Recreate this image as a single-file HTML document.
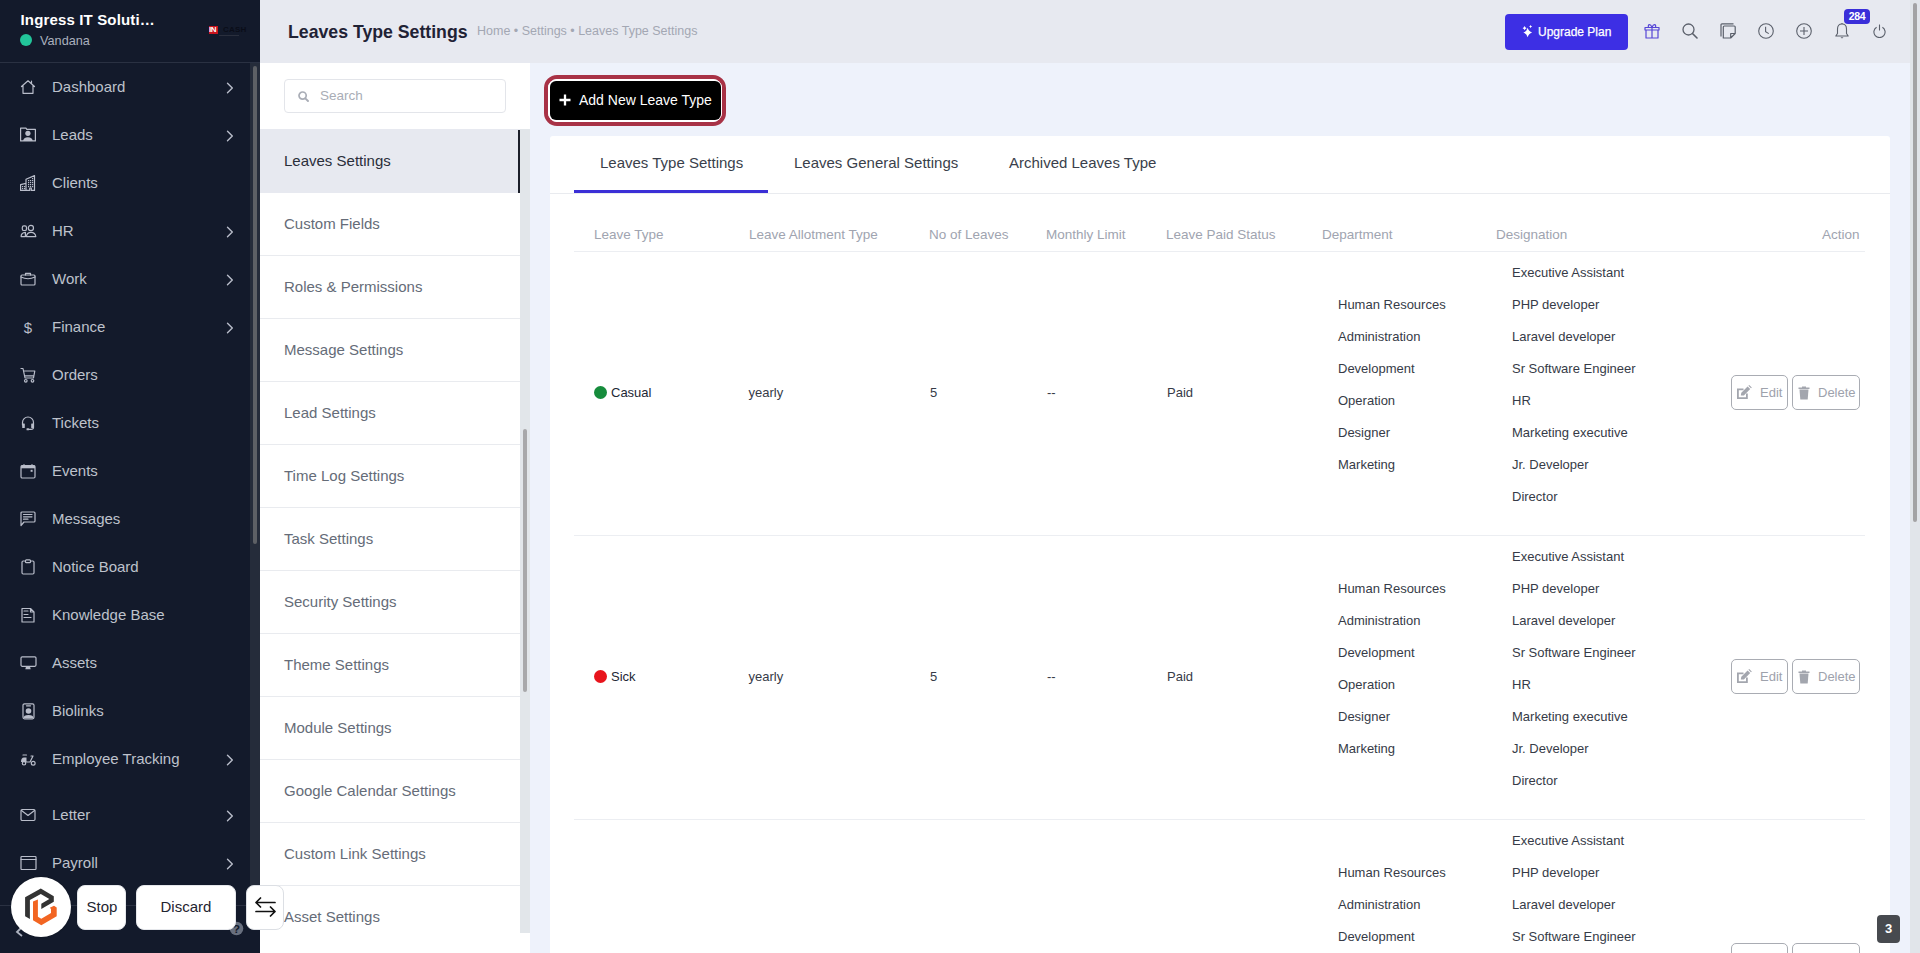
<!DOCTYPE html>
<html><head><meta charset="utf-8">
<style>
*{box-sizing:border-box;margin:0;padding:0}
html,body{width:1920px;height:953px;overflow:hidden;font-family:"Liberation Sans",sans-serif;background:#eef2fb}
.abs{position:absolute}
/* left sidebar */
#sb{position:absolute;left:0;top:0;width:260px;height:953px;background:#131a2b}
#sb .hd{position:absolute;left:0;top:0;width:260px;height:63px;border-bottom:1px solid #2a3142}
#sb .co{position:absolute;left:20.5px;top:10.5px;font-size:15px;font-weight:bold;color:#fff;white-space:nowrap;letter-spacing:0.15px}
#sb .us{position:absolute;left:40px;top:34px;font-size:12.7px;color:#aab0bd}
#sb .dot{position:absolute;left:20px;top:34px;width:12px;height:12px;border-radius:50%;background:#22c59a}
#sb .track{position:absolute;left:250px;top:63px;width:10px;height:842px;background:#252c3a}
#sb .thumb{position:absolute;left:253px;top:66px;width:4px;height:478px;border-radius:2px;background:#5d6065}
.mi{position:absolute;left:0;width:250px;height:48px}
.mi .ic{position:absolute;left:20px;top:16px;width:16px;height:16px;overflow:visible}
.mi .tx{position:absolute;left:52px;top:15.3px;font-size:15px;color:#bec2cc;white-space:nowrap}
.mi .ch{position:absolute;left:225px;top:19px;width:10px;height:12px}
/* header */
#hdr{position:absolute;left:260px;top:0;width:1660px;height:63px;background:#e7e9f0}
/* settings panel */
#sp{position:absolute;left:260px;top:63px;width:270px;height:890px;background:#fff}
.si{position:absolute;left:0;width:260px;height:63px;border-bottom:1px solid #e9ebef}
.si span{position:absolute;left:24px;top:21.9px;font-size:15px;color:#656c78;white-space:nowrap}
.si.act{background:#e7e9f0}
.si.act:after{content:"";position:absolute;left:258px;top:1px;width:2px;height:63px;background:#1b1e29}
.si.act span{color:#2a2e3a;top:22.8px}
/* main */
#card{position:absolute;left:550px;top:136px;width:1340px;height:830px;background:#fff;border-radius:3px}
.th{position:absolute;top:226.5px;font-size:13.5px;color:#a0a4b0;white-space:nowrap}
.td{position:absolute;font-size:13px;line-height:32px;color:#363b47;white-space:nowrap}
.btn{position:absolute;height:35px;border:1px solid #a9acb3;border-radius:5px;background:#fff}
.btn span{position:absolute;top:9px;font-size:13px;color:#9ea2ac}
</style></head><body>

<div id="sb">
  <div class="hd">
    <div class="co">Ingress IT Soluti…</div>
    <div class="dot"></div>
    <div class="us">Vandana</div>
    <div class="abs" style="left:209px;top:26px;width:9px;height:8px;background:#c8141e"></div>
    <span class="abs" style="left:209px;top:25px;font-size:8px;font-weight:bold;color:#fff;letter-spacing:-0.5px">IN</span>
    <span class="abs" style="left:223px;top:25px;font-size:8px;font-weight:bold;color:#0a0d18;letter-spacing:0.2px">CASH</span><div class="abs" style="left:219px;top:35px;width:20px;height:1px;background:#2a2f3d"></div>
  </div>
  <div class="track"></div><div class="thumb"></div>
  <div id="menu">
<div class="mi" style="top:63px"><svg class="ic" viewBox="0 0 16 16"><path d="M1.5 7.5 L8 1.8 L14.5 7.5 M3 6.3 V14.3 H13 V6.3 M11.5 2.2 V4.8" stroke="#b9bdca" stroke-width="1.2" fill="none" stroke-linecap="round" stroke-linejoin="round"/></svg><span class="tx">Dashboard</span><svg class="ch" viewBox="0 0 10 12"><path d="M2.5 1.2 L7.3 6 L2.5 10.8" stroke="#b9bdca" stroke-width="1.4" fill="none" stroke-linecap="round" stroke-linejoin="round"/></svg></div>
<div class="mi" style="top:111px"><svg class="ic" viewBox="0 0 16 16"><path d="M0.6 13.9 V1.2 H6 L6.8 2.4 H15.4 V13.9 Z" stroke="#b9bdca" stroke-width="1.2" fill="none" stroke-linecap="round" stroke-linejoin="round"/><circle cx="7.9" cy="6.3" r="2.6" fill="#b9bdca"/><path d="M3.1 13.9 Q3.5 10.2 7.9 10.2 Q12.3 10.2 12.7 13.9 Z" fill="#b9bdca"/></svg><span class="tx">Leads</span><svg class="ch" viewBox="0 0 10 12"><path d="M2.5 1.2 L7.3 6 L2.5 10.8" stroke="#b9bdca" stroke-width="1.4" fill="none" stroke-linecap="round" stroke-linejoin="round"/></svg></div>
<div class="mi" style="top:159px"><svg class="ic" viewBox="0 0 16 16"><path d="M0.6 15.4 V9.6 L6 8.4 M6 15.4 V4.3 L14.5 0.6 V15.4 H11.3 V13 H9.7 V15.4 H0.6" stroke="#b9bdca" stroke-width="1.2" fill="none" stroke-linecap="round" stroke-linejoin="round"/><g fill="#b9bdca"><rect x="2" y="11" width="1.2" height="1.2"/><rect x="4" y="11" width="1.2" height="1.2"/><rect x="2" y="13" width="1.2" height="1.2"/><rect x="4" y="13" width="1.2" height="1.2"/><rect x="8" y="5" width="1.2" height="1.2"/><rect x="10" y="5" width="1.2" height="1.2"/><rect x="12" y="5" width="1.2" height="1.2"/><rect x="8" y="7" width="1.2" height="1.2"/><rect x="10" y="7" width="1.2" height="1.2"/><rect x="12" y="7" width="1.2" height="1.2"/><rect x="8" y="9" width="1.2" height="1.2"/><rect x="10" y="9" width="1.2" height="1.2"/><rect x="12" y="9" width="1.2" height="1.2"/><rect x="8" y="11" width="1.2" height="1.2"/><rect x="10" y="11" width="1.2" height="1.2"/><rect x="12" y="11" width="1.2" height="1.2"/><rect x="12" y="3" width="1.2" height="1.2"/></g></svg><span class="tx">Clients</span></div>
<div class="mi" style="top:207px"><svg class="ic" viewBox="0 0 16 16"><rect x="2.3" y="2.9" width="4.2" height="4.6" rx="1.6" stroke="#b9bdca" stroke-width="1.2" fill="none" stroke-linecap="round" stroke-linejoin="round"/><circle cx="10.9" cy="5" r="2.6" stroke="#b9bdca" stroke-width="1.2" fill="none" stroke-linecap="round" stroke-linejoin="round"/><path d="M1.1 13.6 Q1.1 9.8 5.4 9.4 V13.6 Z M6.4 13.6 Q6.8 9.3 11 9.3 Q15.3 9.3 15.8 13.6 Z" stroke="#b9bdca" stroke-width="1.2" fill="none" stroke-linecap="round" stroke-linejoin="round"/></svg><span class="tx">HR</span><svg class="ch" viewBox="0 0 10 12"><path d="M2.5 1.2 L7.3 6 L2.5 10.8" stroke="#b9bdca" stroke-width="1.4" fill="none" stroke-linecap="round" stroke-linejoin="round"/></svg></div>
<div class="mi" style="top:255px"><svg class="ic" viewBox="0 0 16 16"><rect x="1" y="4" width="14" height="10" rx="1" stroke="#b9bdca" stroke-width="1.2" fill="none" stroke-linecap="round" stroke-linejoin="round"/><path d="M5.5 4 V2.3 H10.5 V4 M1 6 Q8 9.5 15 6" stroke="#b9bdca" stroke-width="1.2" fill="none" stroke-linecap="round" stroke-linejoin="round"/></svg><span class="tx">Work</span><svg class="ch" viewBox="0 0 10 12"><path d="M2.5 1.2 L7.3 6 L2.5 10.8" stroke="#b9bdca" stroke-width="1.4" fill="none" stroke-linecap="round" stroke-linejoin="round"/></svg></div>
<div class="mi" style="top:303px"><svg class="ic" viewBox="0 0 16 16"><text x="8" y="13.5" font-family="Liberation Sans" font-size="15" text-anchor="middle" fill="#b9bdca">$</text></svg><span class="tx">Finance</span><svg class="ch" viewBox="0 0 10 12"><path d="M2.5 1.2 L7.3 6 L2.5 10.8" stroke="#b9bdca" stroke-width="1.4" fill="none" stroke-linecap="round" stroke-linejoin="round"/></svg></div>
<div class="mi" style="top:351px"><svg class="ic" viewBox="0 0 16 16"><path d="M1 1.5 H3 L5 11 H13.5 L14.8 4 H4 M4.8 8.8 H13.8" stroke="#b9bdca" stroke-width="1.2" fill="none" stroke-linecap="round" stroke-linejoin="round"/><circle cx="5.8" cy="13.8" r="1.3" stroke="#b9bdca" stroke-width="1.2" fill="none" stroke-linecap="round" stroke-linejoin="round"/><circle cx="12.5" cy="13.8" r="1.3" stroke="#b9bdca" stroke-width="1.2" fill="none" stroke-linecap="round" stroke-linejoin="round"/></svg><span class="tx">Orders</span></div>
<div class="mi" style="top:399px"><svg class="ic" viewBox="0 0 16 16"><path d="M2.5 10 V7.5 A5.5 5.5 0 0 1 13.5 7.5 V12.5 Q13.5 14.3 11 14.3 H8.5" stroke="#b9bdca" stroke-width="1.2" fill="none" stroke-linecap="round" stroke-linejoin="round"/><rect x="2.2" y="8.5" width="2.6" height="4.5" rx="0.6" fill="#b9bdca"/><rect x="11.2" y="8.5" width="2.6" height="4.5" rx="0.6" fill="#b9bdca"/><rect x="6.5" y="13.3" width="2.5" height="2" rx="0.5" fill="#b9bdca"/></svg><span class="tx">Tickets</span></div>
<div class="mi" style="top:447px"><svg class="ic" viewBox="0 0 16 16"><rect x="1" y="2.5" width="14" height="12.5" rx="1.2" stroke="#b9bdca" stroke-width="1.2" fill="none" stroke-linecap="round" stroke-linejoin="round"/><rect x="1" y="2.5" width="14" height="2.8" fill="#b9bdca"/><rect x="10.6" y="6.8" width="2" height="2" fill="#b9bdca"/><path d="M4 1.5 V2.5 M12 1.5 V2.5" stroke="#b9bdca" stroke-width="1.2" fill="none" stroke-linecap="round" stroke-linejoin="round"/></svg><span class="tx">Events</span></div>
<div class="mi" style="top:495px"><svg class="ic" viewBox="0 0 16 16"><path d="M1 14.5 V2 Q1 1 2 1 H14 Q15 1 15 2 V10 Q15 11 14 11 H4 Z" stroke="#b9bdca" stroke-width="1.2" fill="none" stroke-linecap="round" stroke-linejoin="round"/><path d="M3.5 3.5 H12 M3.5 5.8 H12 M3.5 8.2 H8" stroke="#b9bdca" stroke-width="1.2" fill="none" stroke-linecap="round" stroke-linejoin="round"/></svg><span class="tx">Messages</span></div>
<div class="mi" style="top:543px"><svg class="ic" viewBox="0 0 16 16"><path d="M4.5 2 H3.2 Q2 2 2 3.2 V13.8 Q2 15 3.2 15 H12.8 Q14 15 14 13.8 V3.2 Q14 2 12.8 2 H11.5" stroke="#b9bdca" stroke-width="1.2" fill="none" stroke-linecap="round" stroke-linejoin="round"/><rect x="5.5" y="0.8" width="5" height="2.8" rx="0.9" stroke="#b9bdca" stroke-width="1.2" fill="none" stroke-linecap="round" stroke-linejoin="round"/></svg><span class="tx">Notice Board</span></div>
<div class="mi" style="top:591px"><svg class="ic" viewBox="0 0 16 16"><path d="M2 1.5 H10.5 L14 5 V15 H2 Z M10.5 1.5 V5 H14" stroke="#b9bdca" stroke-width="1.2" fill="none" stroke-linecap="round" stroke-linejoin="round"/><path d="M4 4 H8 M4 7.5 H8 M4 10.5 H11" stroke="#b9bdca" stroke-width="1.2" fill="none" stroke-linecap="round" stroke-linejoin="round"/></svg><span class="tx">Knowledge Base</span></div>
<div class="mi" style="top:639px"><svg class="ic" viewBox="0 0 16 16"><rect x="1" y="1.8" width="15" height="9.5" rx="1.2" stroke="#b9bdca" stroke-width="1.2" fill="none" stroke-linecap="round" stroke-linejoin="round"/><path d="M6 11.5 L5.3 14.3 H10.7 L10 11.5 Z" fill="#b9bdca"/></svg><span class="tx">Assets</span></div>
<div class="mi" style="top:687px"><svg class="ic" viewBox="0 0 16 16"><rect x="3" y="0.8" width="11" height="15" rx="1.5" stroke="#b9bdca" stroke-width="1.2" fill="none" stroke-linecap="round" stroke-linejoin="round"/><path d="M6.5 2.8 H10.5" stroke="#b9bdca" stroke-width="1.2" fill="none" stroke-linecap="round" stroke-linejoin="round"/><circle cx="8.5" cy="8" r="2.8" fill="#b9bdca"/><path d="M3.5 15 Q3.5 12 8.5 12 Q13.5 12 13.5 15 Z" fill="#b9bdca"/></svg><span class="tx">Biolinks</span></div>
<div class="mi" style="top:735px"><svg class="ic" viewBox="0 0 16 16"><path d="M3 4 H6.5" stroke="#b9bdca" stroke-width="1.2" fill="none" stroke-linecap="round" stroke-linejoin="round" stroke-width="1.6"/><path d="M1 11 Q1 6.5 4 6.5 H6.5 V11 H14" fill="#b9bdca"/><path d="M6 11 H10 L13 5 H11" stroke="#b9bdca" stroke-width="1.2" fill="none" stroke-linecap="round" stroke-linejoin="round"/><circle cx="4" cy="12.3" r="1.7" stroke="#b9bdca" stroke-width="1.2" fill="none" stroke-linecap="round" stroke-linejoin="round"/><circle cx="13.2" cy="12.3" r="1.9" stroke="#b9bdca" stroke-width="1.2" fill="none" stroke-linecap="round" stroke-linejoin="round" stroke-width="1.5"/></svg><span class="tx">Employee Tracking</span><svg class="ch" viewBox="0 0 10 12"><path d="M2.5 1.2 L7.3 6 L2.5 10.8" stroke="#b9bdca" stroke-width="1.4" fill="none" stroke-linecap="round" stroke-linejoin="round"/></svg></div>
<div class="mi" style="top:791px"><svg class="ic" viewBox="0 0 16 16"><rect x="1" y="2.5" width="14" height="11" rx="1.2" stroke="#b9bdca" stroke-width="1.2" fill="none" stroke-linecap="round" stroke-linejoin="round"/><path d="M1.5 3.5 L8 8.5 L14.5 3.5" stroke="#b9bdca" stroke-width="1.2" fill="none" stroke-linecap="round" stroke-linejoin="round"/></svg><span class="tx">Letter</span><svg class="ch" viewBox="0 0 10 12"><path d="M2.5 1.2 L7.3 6 L2.5 10.8" stroke="#b9bdca" stroke-width="1.4" fill="none" stroke-linecap="round" stroke-linejoin="round"/></svg></div>
<div class="mi" style="top:839px"><svg class="ic" viewBox="0 0 16 16"><rect x="1" y="1.5" width="15" height="13" rx="0.8" stroke="#b9bdca" stroke-width="1.2" fill="none" stroke-linecap="round" stroke-linejoin="round"/><path d="M1 4.5 H16" stroke="#b9bdca" stroke-width="1.2" fill="none" stroke-linecap="round" stroke-linejoin="round"/></svg><span class="tx">Payroll</span><svg class="ch" viewBox="0 0 10 12"><path d="M2.5 1.2 L7.3 6 L2.5 10.8" stroke="#b9bdca" stroke-width="1.4" fill="none" stroke-linecap="round" stroke-linejoin="round"/></svg></div>
</div>
</div>

<div id="hdr">
  <div class="abs" style="left:28px;top:22px;font-size:17.7px;font-weight:bold;color:#1f2235;white-space:nowrap">Leaves Type Settings</div>
  <div class="abs" style="left:217px;top:23.5px;font-size:12.5px;color:#a3a7b3;white-space:nowrap">Home • Settings • Leaves Type Settings</div>
  <div class="abs" style="left:1245px;top:14px;width:123px;height:36px;background:#3d2fe4;border-radius:4px">
    <svg class="abs" style="left:16px;top:8px" width="14" height="16" viewBox="1521 22 14 16"><path d="M1527.7 27.7 Q1528.6680000000001 31.444 1532.1000000000001 32.5 Q1528.6680000000001 33.556 1527.7 37.3 Q1526.732 33.556 1523.3 32.5 Q1526.732 31.444 1527.7 27.7Z M1524.6 26.099999999999998 Q1525.04 27.738 1526.6 28.2 Q1525.04 28.662 1524.6 30.3 Q1524.1599999999999 28.662 1522.6 28.2 Q1524.1599999999999 27.738 1524.6 26.099999999999998Z M1530.6 24.900000000000002 Q1530.952 26.226000000000003 1532.1999999999998 26.6 Q1530.952 26.974 1530.6 28.3 Q1530.2479999999998 26.974 1529.0 26.6 Q1530.2479999999998 26.226000000000003 1530.6 24.900000000000002Z" fill="#fff"/></svg>
    <span class="abs" style="left:33px;top:11px;font-size:12px;color:#fff;white-space:nowrap;-webkit-text-stroke:0.25px #fff">Upgrade Plan</span>
  </div>
  <svg class="abs" style="left:1384px;top:23px" width="16" height="16" viewBox="0 0 16 16"><path d="M1 4.5 H15 V7 H1 Z M2 7 V15 H14 V7 M8 4.5 V15 M8 4.5 C6.5 0.5 3.5 1 4.5 4.5 M8 4.5 C9.5 0.5 12.5 1 11.5 4.5" stroke="#5646d6" stroke-width="1.2" fill="none" stroke-linejoin="round"/></svg>
  <svg class="abs" style="left:1422px;top:23px" width="16" height="16" viewBox="0 0 16 16"><circle cx="6.5" cy="6.5" r="5.5" stroke="#5b606b" stroke-width="1.3" fill="none"/><path d="M10.5 10.5 L15 15" stroke="#5b606b" stroke-width="1.6" stroke-linecap="round"/></svg>
  <svg class="abs" style="left:1460px;top:23px" width="16" height="16" viewBox="0 0 16 16"><path d="M1 13.5 V1.8 Q1 0.8 2 0.8 H13.5" stroke="#5b606b" stroke-width="1.2" fill="none"/><path d="M3.3 15 V4 Q3.3 3 4.3 3 H14.3 Q15.2 3 15.2 4 V10.5 L10.7 15 Z M10.7 15 V10.5 H15.2" stroke="#5b606b" stroke-width="1.2" fill="none" stroke-linejoin="round"/></svg>
  <svg class="abs" style="left:1498px;top:23px" width="16" height="16" viewBox="0 0 16 16"><circle cx="8" cy="8" r="7.3" stroke="#5b606b" stroke-width="1.1" fill="none"/><path d="M7.6 3.8 V8.6 L10.8 10.6" stroke="#5b606b" stroke-width="1.1" fill="none"/></svg>
  <svg class="abs" style="left:1536px;top:23px" width="16" height="16" viewBox="0 0 16 16"><circle cx="8" cy="8" r="7.3" stroke="#5b606b" stroke-width="1.1" fill="none"/><path d="M8 4 V12 M4 8 H12" stroke="#5b606b" stroke-width="1.1" fill="none"/></svg>
  <svg class="abs" style="left:1575px;top:23px" width="14" height="16" viewBox="0 0 14 16"><path d="M7 1 Q11.5 1 11.5 6 V10.5 L13.2 13 H0.8 L2.5 10.5 V6 Q2.5 1 7 1 Z" stroke="#5b606b" stroke-width="1.1" fill="none" stroke-linejoin="round"/><path d="M5.5 14.2 H8.5 L7 15.6 Z" fill="#5b606b"/><path d="M7 0 V1" stroke="#5b606b" stroke-width="1.2"/></svg>
  <div class="abs" style="left:1584px;top:9px;width:26px;height:15px;background:#3a2fd9;border-radius:4px;color:#fff;font-size:10.5px;font-weight:bold;text-align:center;line-height:15px;letter-spacing:-0.3px">284</div>
  <svg class="abs" style="left:1613px;top:24px" width="13" height="14" viewBox="0 0 13 14"><path d="M3.6 3.2 A5.6 5.6 0 1 0 9.4 3.2" stroke="#5b606b" stroke-width="1.1" fill="none"/><path d="M6.5 0.5 V6.5" stroke="#5b606b" stroke-width="1.1"/></svg>
</div>

<div id="sp">
  <div class="abs" style="left:24px;top:16px;width:222px;height:34px;border:1px solid #e3e5ea;border-radius:4px">
    <svg class="abs" style="left:13px;top:11px" width="11" height="11" viewBox="0 0 11 11"><circle cx="4.6" cy="4.6" r="3.6" stroke="#a9adb6" stroke-width="1.7" fill="none"/><path d="M7.3 7.3 L10 10" stroke="#a9adb6" stroke-width="1.9" stroke-linecap="round"/></svg><span class="abs" style="left:35px;top:8px;font-size:13.5px;color:#a9adb6">Search</span>
  </div>
  <div class="abs" style="left:260px;top:66px;width:10px;height:804px;background:#e2e6ea"></div>
  <div class="abs" style="left:263px;top:366px;width:4px;height:263px;border-radius:2px;background:#a8a8aa"></div>
  <div class="si act" style="top:66px;height:64px;border-bottom:0"><span>Leaves Settings</span></div>
  <div class="si" style="top:130px"><span>Custom Fields</span></div>
  <div class="si" style="top:193px"><span>Roles &amp; Permissions</span></div>
  <div class="si" style="top:256px"><span>Message Settings</span></div>
  <div class="si" style="top:319px"><span>Lead Settings</span></div>
  <div class="si" style="top:382px"><span>Time Log Settings</span></div>
  <div class="si" style="top:445px"><span>Task Settings</span></div>
  <div class="si" style="top:508px"><span>Security Settings</span></div>
  <div class="si" style="top:571px"><span>Theme Settings</span></div>
  <div class="si" style="top:634px"><span>Module Settings</span></div>
  <div class="si" style="top:697px"><span>Google Calendar Settings</span></div>
  <div class="si" style="top:760px"><span>Custom Link Settings</span></div>
  <div class="si" style="top:823px;height:48px;border-bottom:0"><span>Asset Settings</span></div>
</div>

<!-- main -->
<div class="abs" style="left:544px;top:75px;width:182px;height:51px;border:4px solid #a83246;border-radius:13px"></div>
<div class="abs" style="left:548px;top:79px;width:174px;height:43px;border:2px solid #fff;border-radius:9px"></div>
<div class="abs" style="left:550px;top:81px;width:171px;height:39px;background:#000;border-radius:6px">
  <svg class="abs" style="left:9px;top:13px" width="12" height="12" viewBox="0 0 12 12"><path d="M6 0.5 V11.5 M0.5 6 H11.5" stroke="#fff" stroke-width="2.3"/></svg><span class="abs" style="left:29px;top:11.3px;font-size:14px;color:#fff;white-space:nowrap">Add New Leave Type</span>
</div>

<div id="card"></div>
<div class="abs" style="left:600px;top:153.6px;font-size:15px;color:#3a3f4b;white-space:nowrap">Leaves Type Settings</div>
<div class="abs" style="left:794px;top:153.6px;font-size:15px;color:#3a3f4b;white-space:nowrap">Leaves General Settings</div>
<div class="abs" style="left:1009px;top:153.6px;font-size:15px;color:#3a3f4b;white-space:nowrap">Archived Leaves Type</div>
<div class="abs" style="left:550px;top:193px;width:1340px;height:1px;background:#e9ebef"></div>
<div class="abs" style="left:574px;top:190px;width:194px;height:3px;background:#3b2fd6"></div>
<div class="th" style="left:594px">Leave Type</div><div class="th" style="left:749px">Leave Allotment Type</div><div class="th" style="left:929px">No of Leaves</div><div class="th" style="left:1046px">Monthly Limit</div><div class="th" style="left:1166px">Leave Paid Status</div><div class="th" style="left:1322px">Department</div><div class="th" style="left:1496px">Designation</div><div class="th" style="left:1822px">Action</div><div class="abs" style="left:574px;top:251px;width:1291px;height:1px;background:#eceef2"></div>
<div class="td li" style="left:1512px;top:256.5px">Executive Assistant</div><div class="td li" style="left:1512px;top:288.5px">PHP developer</div><div class="td li" style="left:1512px;top:320.5px">Laravel developer</div><div class="td li" style="left:1512px;top:352.5px">Sr Software Engineer</div><div class="td li" style="left:1512px;top:384.5px">HR</div><div class="td li" style="left:1512px;top:416.5px">Marketing executive</div><div class="td li" style="left:1512px;top:448.5px">Jr. Developer</div><div class="td li" style="left:1512px;top:480.5px">Director</div><div class="td li" style="left:1338px;top:288.5px">Human Resources</div><div class="td li" style="left:1338px;top:320.5px">Administration</div><div class="td li" style="left:1338px;top:352.5px">Development</div><div class="td li" style="left:1338px;top:384.5px">Operation</div><div class="td li" style="left:1338px;top:416.5px">Designer</div><div class="td li" style="left:1338px;top:448.5px">Marketing</div><div class="abs" style="left:594px;top:386px;width:13px;height:13px;border-radius:50%;background:#168c3c"></div><div class="td li" style="left:611px;top:376.8px;color:#222735;">Casual</div><div class="td li" style="left:748.5px;top:376.8px;">yearly</div><div class="td li" style="left:930px;top:376.8px;">5</div><div class="td li" style="left:1047px;top:376.8px;">--</div><div class="td li" style="left:1167px;top:376.8px;">Paid</div><div class="btn" style="left:1731px;top:375px;width:57px"><svg class="abs" style="left:5px;top:10px;overflow:visible" width="15" height="13" viewBox="0 0 15 13"><path d="M0 2.5 H6.5 V4.3 H1.8 V11.2 H9 V7.5 H10.8 V13 H0 Z" fill="#a3a6ae"/><path d="M3.8 9.5 L4.3 6.8 L10.6 0.5 L13.2 3.1 L6.9 9.4 Z" fill="#a3a6ae"/><path d="M11.4 -0.3 L12.2 -1.1 L14.8 1.5 L14 2.3 Z" fill="#a3a6ae"/></svg><span style="left:28px">Edit</span></div><div class="btn" style="left:1792px;top:375px;width:68px"><svg class="abs" style="left:5px;top:10px" width="12" height="14" viewBox="0 0 12 14"><path d="M0.5 1.5 H4 V0.5 H8 V1.5 H11.5 V3 H0.5 Z" fill="#a3a6ae"/><path d="M1.5 3.5 H10.5 L9.7 13.5 H2.3 Z" fill="#a3a6ae"/></svg><span style="left:25px">Delete</span></div>
<div class="abs" style="left:574px;top:535px;width:1291px;height:1px;background:#eceef2"></div>
<div class="td li" style="left:1512px;top:540.5px">Executive Assistant</div><div class="td li" style="left:1512px;top:572.5px">PHP developer</div><div class="td li" style="left:1512px;top:604.5px">Laravel developer</div><div class="td li" style="left:1512px;top:636.5px">Sr Software Engineer</div><div class="td li" style="left:1512px;top:668.5px">HR</div><div class="td li" style="left:1512px;top:700.5px">Marketing executive</div><div class="td li" style="left:1512px;top:732.5px">Jr. Developer</div><div class="td li" style="left:1512px;top:764.5px">Director</div><div class="td li" style="left:1338px;top:572.5px">Human Resources</div><div class="td li" style="left:1338px;top:604.5px">Administration</div><div class="td li" style="left:1338px;top:636.5px">Development</div><div class="td li" style="left:1338px;top:668.5px">Operation</div><div class="td li" style="left:1338px;top:700.5px">Designer</div><div class="td li" style="left:1338px;top:732.5px">Marketing</div><div class="abs" style="left:594px;top:670px;width:13px;height:13px;border-radius:50%;background:#e8141c"></div><div class="td li" style="left:611px;top:660.8px;color:#222735;">Sick</div><div class="td li" style="left:748.5px;top:660.8px;">yearly</div><div class="td li" style="left:930px;top:660.8px;">5</div><div class="td li" style="left:1047px;top:660.8px;">--</div><div class="td li" style="left:1167px;top:660.8px;">Paid</div><div class="btn" style="left:1731px;top:659px;width:57px"><svg class="abs" style="left:5px;top:10px;overflow:visible" width="15" height="13" viewBox="0 0 15 13"><path d="M0 2.5 H6.5 V4.3 H1.8 V11.2 H9 V7.5 H10.8 V13 H0 Z" fill="#a3a6ae"/><path d="M3.8 9.5 L4.3 6.8 L10.6 0.5 L13.2 3.1 L6.9 9.4 Z" fill="#a3a6ae"/><path d="M11.4 -0.3 L12.2 -1.1 L14.8 1.5 L14 2.3 Z" fill="#a3a6ae"/></svg><span style="left:28px">Edit</span></div><div class="btn" style="left:1792px;top:659px;width:68px"><svg class="abs" style="left:5px;top:10px" width="12" height="14" viewBox="0 0 12 14"><path d="M0.5 1.5 H4 V0.5 H8 V1.5 H11.5 V3 H0.5 Z" fill="#a3a6ae"/><path d="M1.5 3.5 H10.5 L9.7 13.5 H2.3 Z" fill="#a3a6ae"/></svg><span style="left:25px">Delete</span></div>
<div class="abs" style="left:574px;top:819px;width:1291px;height:1px;background:#eceef2"></div>
<div class="td li" style="left:1512px;top:824.5px">Executive Assistant</div><div class="td li" style="left:1512px;top:856.5px">PHP developer</div><div class="td li" style="left:1512px;top:888.5px">Laravel developer</div><div class="td li" style="left:1512px;top:920.5px">Sr Software Engineer</div><div class="td li" style="left:1512px;top:952.5px">HR</div><div class="td li" style="left:1512px;top:984.5px">Marketing executive</div><div class="td li" style="left:1512px;top:1016.5px">Jr. Developer</div><div class="td li" style="left:1512px;top:1048.5px">Director</div><div class="td li" style="left:1338px;top:856.5px">Human Resources</div><div class="td li" style="left:1338px;top:888.5px">Administration</div><div class="td li" style="left:1338px;top:920.5px">Development</div><div class="td li" style="left:1338px;top:952.5px">Operation</div><div class="td li" style="left:1338px;top:984.5px">Designer</div><div class="td li" style="left:1338px;top:1016.5px">Marketing</div><div class="btn" style="left:1731px;top:943px;width:57px"><svg class="abs" style="left:5px;top:10px;overflow:visible" width="15" height="13" viewBox="0 0 15 13"><path d="M0 2.5 H6.5 V4.3 H1.8 V11.2 H9 V7.5 H10.8 V13 H0 Z" fill="#a3a6ae"/><path d="M3.8 9.5 L4.3 6.8 L10.6 0.5 L13.2 3.1 L6.9 9.4 Z" fill="#a3a6ae"/><path d="M11.4 -0.3 L12.2 -1.1 L14.8 1.5 L14 2.3 Z" fill="#a3a6ae"/></svg><span style="left:28px">Edit</span></div><div class="btn" style="left:1792px;top:943px;width:68px"><svg class="abs" style="left:5px;top:10px" width="12" height="14" viewBox="0 0 12 14"><path d="M0.5 1.5 H4 V0.5 H8 V1.5 H11.5 V3 H0.5 Z" fill="#a3a6ae"/><path d="M1.5 3.5 H10.5 L9.7 13.5 H2.3 Z" fill="#a3a6ae"/></svg><span style="left:25px">Delete</span></div>
<div class="abs" style="left:574px;top:1103px;width:1291px;height:1px;background:#eceef2"></div>


<!-- sidebar footer -->
<div class="abs" style="left:0;top:905px;width:250px;height:1px;background:#2a3142"></div>
<svg class="abs" style="left:15px;top:926px" width="10" height="11" viewBox="0 0 10 11"><path d="M7 1 L2 6 L7 10" stroke="#aeb3c0" stroke-width="1.8" fill="none"/></svg>
<svg class="abs" style="left:229px;top:920.5px" width="15" height="15" viewBox="0 0 15 15"><circle cx="7.5" cy="7.5" r="6.8" fill="#686f7e"/><text x="7.5" y="11.8" font-family="Liberation Sans" font-weight="bold" font-size="11.5" text-anchor="middle" fill="#131a2b">?</text></svg>
<!-- floating toolbar -->
<div class="abs" style="left:11px;top:877px;width:60px;height:60px;border-radius:50%;background:#fff;box-shadow:0 0 2px rgba(0,0,0,.3)"></div>
<svg class="abs" style="left:20px;top:883px" width="42" height="46" viewBox="20 883 42 46"><path d="M25.1 897.3 L40.8 888.6 L53.8 896.3 V901.8 L41.3 909.1 V903.8 L49.3 899 L40.8 894 L29.9 900 V919 L25.1 916.3 Z" fill="#333"/><path d="M33 901.5 L37.9 899.5 V916.8 L41.3 918.7 L51 913 V909 L49.8 907.8 L54 905.8 L56.7 907.4 V916.3 L41.3 925.2 L33 920.3 Z" fill="#f26522"/></svg>
<div class="abs" style="left:77px;top:885px;width:49px;height:45px;border-radius:8px;background:#fff;border:1px solid #e5e7eb"><span class="abs" style="left:8.5px;top:12px;font-size:15px;color:#1f2430">Stop</span></div>
<div class="abs" style="left:136px;top:885px;width:100px;height:45px;border-radius:8px;background:#fff;border:1px solid #e5e7eb"><span class="abs" style="left:23.5px;top:12px;font-size:15px;color:#1f2430">Discard</span></div>
<div class="abs" style="left:246px;top:885px;width:38px;height:45px;border-radius:8px;background:#fff;border:1px solid #dcdfe4"><svg class="abs" style="left:8px;top:11px" width="21" height="20" viewBox="0 0 21 20"><path d="M1 5.5 H20 M1 5.5 L5.5 1 M1 5.5 L5.5 10 M20 14.5 H1 M20 14.5 L15.5 10 M20 14.5 L15.5 19" stroke="#111" stroke-width="1.7" fill="none" stroke-linecap="round" stroke-linejoin="round"/></svg></div>
<div class="abs" style="left:1877px;top:915px;width:23px;height:28px;border-radius:4px;background:#474a4f;color:#fff;font-family:'Liberation Sans',sans-serif;font-weight:bold;font-size:13px;text-align:center;line-height:28px">3</div>
<!-- right scrollbar -->
<div class="abs" style="left:1910px;top:0;width:10px;height:953px;background:#e1e5ea"></div>
<div class="abs" style="left:1913px;top:3px;width:4px;height:519px;border-radius:2px;background:#a3a3a5"></div>

</body></html>
